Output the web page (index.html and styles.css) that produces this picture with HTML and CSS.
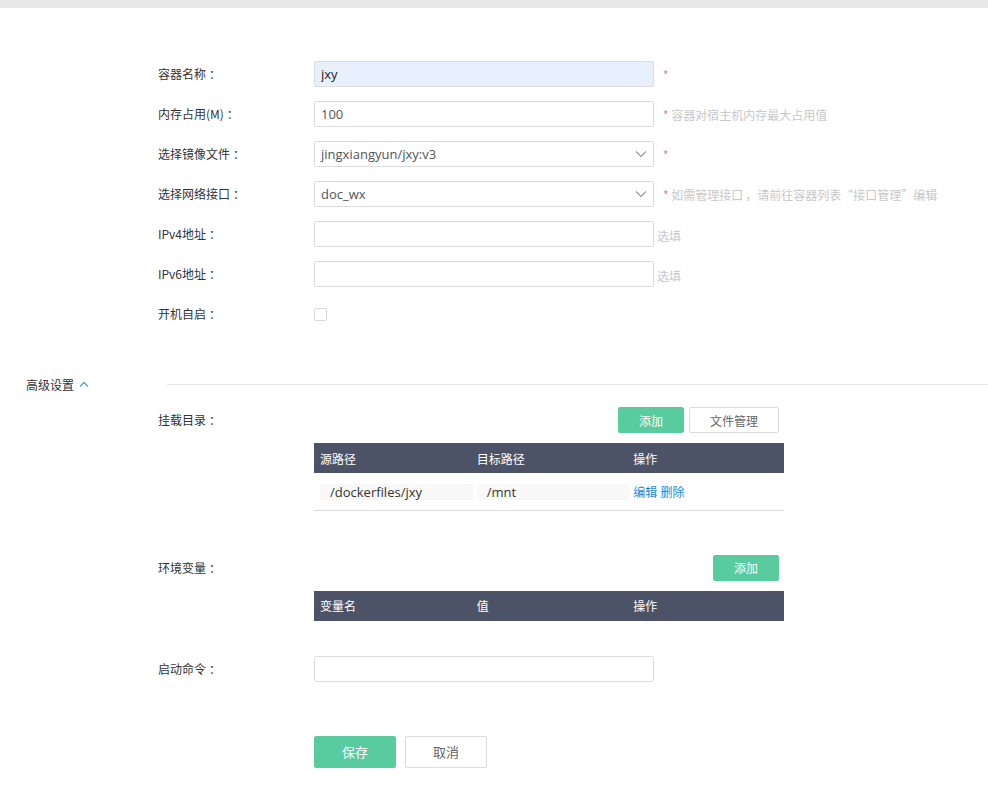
FILE: index.html
```html
<!DOCTYPE html>
<html lang="zh-CN">
<head>
<meta charset="utf-8">
<title>容器设置</title>
<link rel="stylesheet" href="styles.css">
</head>
<body>
<div class="topbar"></div>
<div class="page">
  <div class="form">
    <div class="row">
      <label class="label">容器名称<span class="colon">：</span></label>
      <input class="input autofill" type="text" value="jxy">
      <span class="hint"><span class="star">*</span></span>
    </div>
    <div class="row">
      <label class="label">内存占用(M)<span class="colon">：</span></label>
      <input class="input" type="text" value="100">
      <span class="hint"><span class="star">*</span> 容器对宿主机内存最大占用值</span>
    </div>
    <div class="row">
      <label class="label">选择镜像文件<span class="colon">：</span></label>
      <div class="select"><span>jingxiangyun/jxy:v3</span>
        <svg class="caret" width="12" height="8" viewBox="0 0 12 8"><path d="M1 1.5 L6 6.5 L11 1.5" fill="none" stroke="#999" stroke-width="1.1"/></svg>
      </div>
      <span class="hint"><span class="star">*</span></span>
    </div>
    <div class="row">
      <label class="label">选择网络接口<span class="colon">：</span></label>
      <div class="select"><span>doc_wx</span>
        <svg class="caret" width="12" height="8" viewBox="0 0 12 8"><path d="M1 1.5 L6 6.5 L11 1.5" fill="none" stroke="#999" stroke-width="1.1"/></svg>
      </div>
      <span class="hint"><span class="star">*</span> 如需管理接口<span class="comma">，</span>请前往容器列表“接口管理”编辑</span>
    </div>
    <div class="row">
      <label class="label">IPv4地址<span class="colon">：</span></label>
      <input class="input" type="text" value="">
      <span class="opt">选填</span>
    </div>
    <div class="row">
      <label class="label">IPv6地址<span class="colon">：</span></label>
      <input class="input" type="text" value="">
      <span class="opt">选填</span>
    </div>
    <div class="row last">
      <label class="label">开机自启<span class="colon">：</span></label>
      <span class="checkbox"></span>
    </div>
  </div>

  <div class="adv-head">
    <span class="adv-title">高级设置</span>
    <svg class="chev" width="10" height="7" viewBox="0 0 10 7"><path d="M1 5.5 L5 1.5 L9 5.5" fill="none" stroke="#5b9bd5" stroke-width="1.3"/></svg>
    <div class="adv-line"></div>
  </div>

  <div class="section mount">
    <label class="label sec-label">挂载目录<span class="colon">：</span></label>
    <div class="toolbar">
      <button class="btn btn-green">添加</button>
      <button class="btn btn-plain wide">文件管理</button>
    </div>
    <table class="table">
      <thead><tr><th>源路径</th><th>目标路径</th><th>操作</th></tr></thead>
      <tbody>
        <tr>
          <td><span class="cell-input">/dockerfiles/jxy</span></td>
          <td><span class="cell-input">/mnt</span></td>
          <td><a class="link">编辑</a> <a class="link">删除</a></td>
        </tr>
      </tbody>
    </table>
  </div>

  <div class="section env">
    <label class="label sec-label">环境变量<span class="colon">：</span></label>
    <div class="toolbar">
      <button class="btn btn-green">添加</button>
    </div>
    <table class="table">
      <thead><tr><th>变量名</th><th>值</th><th>操作</th></tr></thead>
      <tbody></tbody>
    </table>
  </div>

  <div class="row cmd">
    <label class="label">启动命令<span class="colon">：</span></label>
    <input class="input" type="text" value="">
  </div>

  <div class="actions">
    <button class="btn btn-green big">保存</button>
    <button class="btn btn-plain big">取消</button>
  </div>
</div>
</body>
</html>
```

FILE: styles.css
```css
* { box-sizing: border-box; }
html, body { margin: 0; padding: 0; background: #fff; }
body {
  font-family: "Open Sans", "Noto Sans CJK SC", sans-serif;
  font-size: 12px;
  color: #333;
  width: 988px;
  height: 792px;
  overflow: hidden;
}
.topbar { height: 8px; background: #e8e8e8; }
.page { padding-bottom: 20px; }

.form { padding: 53px 0 0 158px; }
.row {
  display: flex;
  align-items: center;
  height: 26px;
  margin-bottom: 14px;
}
.row.last { margin-bottom: 0; }
.label {
  flex: none;
  width: 156px;
  font-family: "Noto Sans CJK SC", sans-serif;
  font-size: 12px;
  line-height: 16px;
  color: #333;
}
.colon { padding-left: 3px; }
.comma { padding-left: 2px; }
.input, .select {
  flex: none;
  width: 340px;
  height: 26px;
  border: 1px solid #dcdcdc;
  border-radius: 2px;
  background: #fff;
  padding: 0 6px;
  font-family: "Open Sans", "Noto Sans CJK SC", sans-serif;
  font-size: 13px;
  color: #555;
  outline: none;
  margin: 0;
}
.input.autofill { background: #e8f0fe; color: #222; }
.select {
  display: flex;
  align-items: center;
  justify-content: space-between;
  padding-right: 6px;
}
.caret { flex: none; }
.hint {
  margin-left: 9px;
  font-family: "Noto Sans CJK SC", sans-serif;
  font-size: 12px;
  color: #c8c8c8;
}
.star { color: #f27b7b; }
.opt {
  margin-left: 3px;
  margin-top: 2px;
  font-family: "Noto Sans CJK SC", sans-serif;
  font-size: 12px;
  color: #c8c8c8;
}
.checkbox {
  width: 13px;
  height: 13px;
  border: 1px solid #d8d8d8;
  border-radius: 2px;
  background: #fff;
}

.adv-head {
  display: flex;
  align-items: center;
  height: 16px;
  margin-top: 49px;
  padding-left: 26px;
}
.adv-title {
  font-family: "Noto Sans CJK SC", sans-serif;
  font-size: 12px;
  color: #333;
}
.chev { margin-left: 5px; flex: none; }
.adv-line {
  flex: 1;
  height: 1px;
  background: #e6e6e6;
  margin-left: 78px;
}

.section {
  display: grid;
  grid-template-columns: 156px 470px;
  padding-left: 158px;
}
.section.mount { margin-top: 15px; }
.section.env { margin-top: 44px; }
.sec-label { grid-column: 1; grid-row: 1; align-self: center; }
.toolbar {
  grid-column: 2;
  grid-row: 1;
  display: flex;
  justify-content: flex-end;
  gap: 5px;
  padding-right: 5px;
  height: 26px;
}
.btn {
  height: 26px;
  width: 66px;
  border-radius: 2px;
  font-family: "Noto Sans CJK SC", sans-serif;
  font-size: 12px;
  padding: 0;
  cursor: pointer;
}
.btn-green { background: #58cb9f; border: 1px solid #58cb9f; color: #fff; }
.btn-plain { background: #fff; border: 1px solid #dcdcdc; color: #666; }
.btn.wide { width: 90px; }
.btn.big { width: 82px; height: 32px; font-size: 13px; }

.table {
  grid-column: 2;
  grid-row: 2;
  margin-top: 10px;
  width: 470px;
  border-collapse: collapse;
  table-layout: fixed;
}
.table th {
  height: 30px;
  background: #4d5366;
  color: #fff;
  font-family: "Noto Sans CJK SC", sans-serif;
  font-size: 12px;
  font-weight: normal;
  text-align: left;
  padding: 0 0 0 6px;
}
.table td {
  height: 37px;
  padding: 1px 0 0 6px;
  border-bottom: 1px solid #dcdcdc;
  vertical-align: middle;
}
.cell-input {
  display: block;
  width: 153px;
  height: 16px;
  line-height: 16px;
  background: #f9f9f9;
  padding-left: 10px;
  font-family: "Open Sans", sans-serif;
  font-size: 13px;
  color: #333;
}
.link {
  color: #1e86e0;
  font-family: "Noto Sans CJK SC", sans-serif;
  font-size: 12px;
  cursor: pointer;
}

.row.cmd { margin-top: 35px; padding-left: 158px; margin-bottom: 0; }

.actions {
  display: flex;
  gap: 9px;
  margin-top: 54px;
  padding-left: 314px;
}
```
